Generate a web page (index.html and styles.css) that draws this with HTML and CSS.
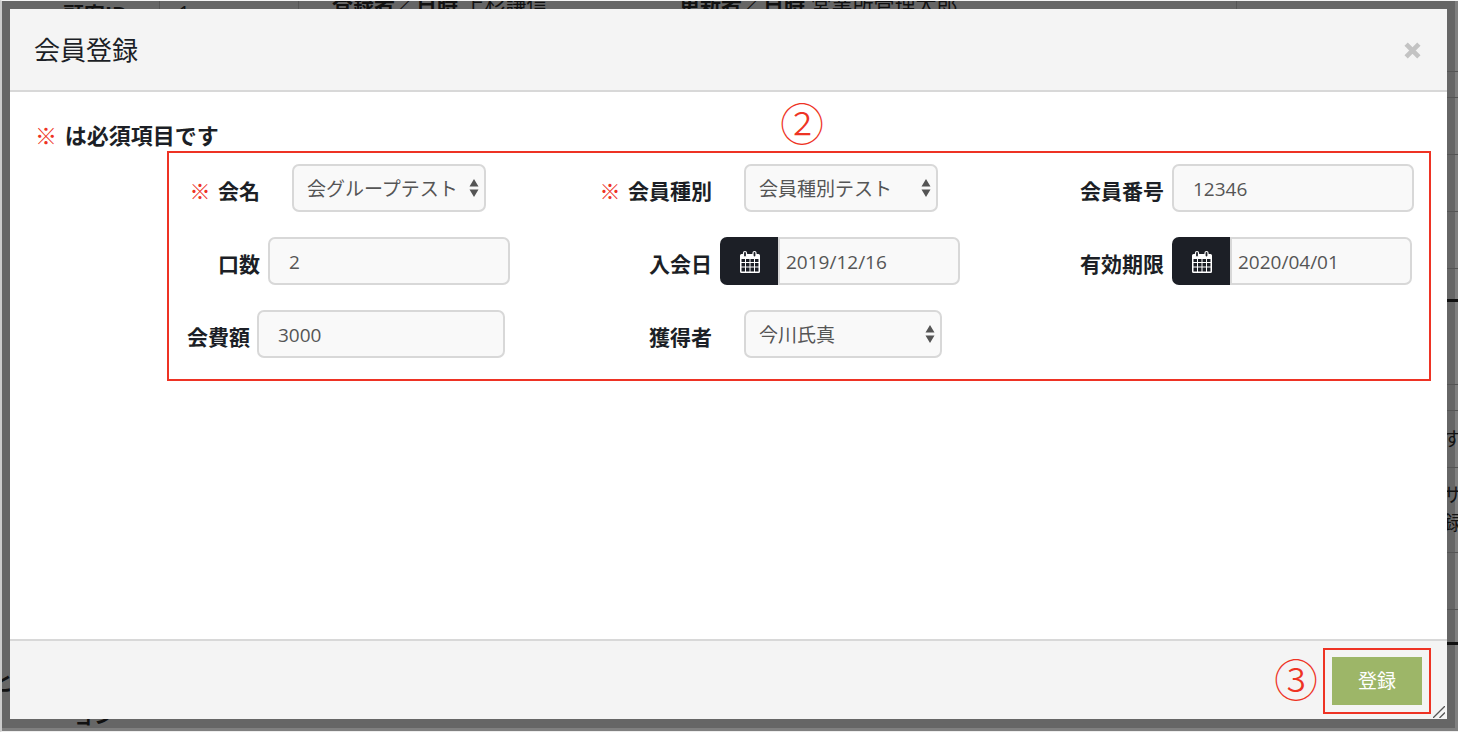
FILE: index.html
```html
<!DOCTYPE html>
<html lang="ja">
<head>
<meta charset="utf-8">
<title>会員登録</title>
<link rel="stylesheet" href="styles.css">
</head>
<body>
<div class="page" aria-hidden="true">
  <i class="shade"></i>
  <b class="bg-text id-label">顧客ID</b>
  <span class="bg-text id-value">1</span>
  <span class="bg-text created"><b>登録者／日時</b> 上杉謙信</span>
  <span class="bg-text updated"><b>更新者／日時</b> 営業所管理太郎</span>
  <i class="vline v1"></i><i class="vline v2"></i><i class="vline v3"></i>
  <div class="rows">
    <i class="r71"></i><i class="r26"></i><i class="r57"></i><i class="r57"></i><i class="r57"></i><i class="r33 thick"></i><i class="r83"></i><i class="r26"></i><i class="r57"></i><i class="r85"></i><i class="r57"></i><i class="r35 thick"></i>
  </div>
  <span class="bg-text side1">す</span>
  <span class="bg-text side2">サ<br>録</span>
  <b class="bg-text corner1">と</b>
  <b class="bg-text corner2">ョン</b>
</div>
<div class="backdrop">
  <form class="modal">
    <header class="modal-header">
      <h1>会員登録</h1>
      <button type="button" class="close" aria-label="閉じる">
        <svg viewBox="0 0 16 16" width="17" height="17"><path d="M2 2 14 14M14 2 2 14" stroke="currentColor" stroke-width="4.4" fill="none"/></svg>
      </button>
    </header>
    <main class="modal-body">
      <h2><span class="req">※</span> は必須項目です</h2>
      <div class="fields">
        <span class="mark mark-form">②</span>
        <label for="group"><span class="req">※</span> 会名</label>
        <div class="field"><span class="select"><select id="group"><option>会グループテスト</option></select><svg viewBox="0 0 10 18" width="10" height="18"><path d="M5 0 9.500 7.500H.5zM5 18 .5 10.500H9.500z"/></svg></span></div>
        <label for="type"><span class="req">※</span> 会員種別</label>
        <div class="field"><span class="select"><select id="type"><option>会員種別テスト</option></select><svg viewBox="0 0 10 18" width="10" height="18"><path d="M5 0 9.500 7.500H.5zM5 18 .5 10.500H9.500z"/></svg></span></div>
        <label for="number">会員番号</label>
        <div class="field"><input id="number" type="text" value="12346"></div>

        <label for="units">口数</label>
        <div class="field"><input id="units" type="text" value="2"></div>
        <label for="joined">入会日</label>
        <div class="field date">
          <button type="button" aria-label="入会日を選択"><svg viewBox="0 0 22 24" width="22" height="24"><path class="cal" fill-rule="evenodd" d="M2.500 4H19.500Q21 4 21 5.500V21.500Q21 23 19.500 23H2.500Q1 23 1 21.500V5.500Q1 4 2.500 4ZM2.500 9V12H6V9ZM7 9V12H10.500V9ZM11.500 9V12H15V9ZM16 9V12H19.500V9ZM2.500 13V16.500H6V13ZM7 13V16.500H10.500V13ZM11.500 13V16.500H15V13ZM16 13V16.500H19.500V13ZM2.500 17.500V21.500H6V17.500ZM7 17.500V21.500H10.500V17.500ZM11.500 17.500V21.500H15V17.500ZM16 17.500V21.500H19.500V17.500Z"/><rect class="ring" x="4.500" y="1.500" width="3" height="5.500" rx="1.500"/><rect class="ring" x="14" y="1.500" width="3" height="5.500" rx="1.500"/></svg></button><input id="joined" type="text" value="2019/12/16">
        </div>
        <label for="expires">有効期限</label>
        <div class="field date">
          <button type="button" aria-label="有効期限を選択"><svg viewBox="0 0 22 24" width="22" height="24"><path class="cal" fill-rule="evenodd" d="M2.500 4H19.500Q21 4 21 5.500V21.500Q21 23 19.500 23H2.500Q1 23 1 21.500V5.500Q1 4 2.500 4ZM2.500 9V12H6V9ZM7 9V12H10.500V9ZM11.500 9V12H15V9ZM16 9V12H19.500V9ZM2.500 13V16.500H6V13ZM7 13V16.500H10.500V13ZM11.500 13V16.500H15V13ZM16 13V16.500H19.500V13ZM2.500 17.500V21.500H6V17.500ZM7 17.500V21.500H10.500V17.500ZM11.500 17.500V21.500H15V17.500ZM16 17.500V21.500H19.500V17.500Z"/><rect class="ring" x="4.500" y="1.500" width="3" height="5.500" rx="1.500"/><rect class="ring" x="14" y="1.500" width="3" height="5.500" rx="1.500"/></svg></button><input id="expires" type="text" value="2020/04/01">
        </div>

        <div class="fee"><label for="fee">会費額</label><input id="fee" type="text" value="3000"></div>
        <label for="owner">獲得者</label>
        <div class="field"><span class="select wide"><select id="owner"><option>今川氏真</option></select><svg viewBox="0 0 10 18" width="10" height="18"><path d="M5 0 9.500 7.500H.5zM5 18 .5 10.500H9.500z"/></svg></span></div>
      </div>
    </main>
    <footer class="modal-footer">
      <span class="mark">③</span>
      <span class="frame"><button type="submit" class="submit">登録</button></span>
      <svg class="grip" viewBox="0 0 12 12" width="12" height="12"><path d="M0 12 12 0M6.500 12 12 6.500" stroke="#555" stroke-width="1.300" fill="none"/></svg>
    </footer>
  </form>
</div>
</body>
</html>
```

FILE: styles.css
```css
* { box-sizing: border-box; }

body {
  margin: 0;
  height: 100vh;
  overflow: hidden;
  font-family: "Open Sans", "Noto Sans CJK JP", sans-serif;
  font-size: 19px;
  color: #1c1f26;
}

input, select, button {
  font: inherit;
  margin: 0;
}

/* dimmed page behind the dialog */
.page {
  position: absolute;
  inset: 0;
  overflow: hidden;
  background: #808080;
  border-top: 1px solid #f4f4f4;
  border-left: 2px solid #ccc;
  border-bottom: 1px solid #eee;
}
.shade {
  position: absolute;
  inset: 0 3px 3px 0;
  background: #666;
}
.bg-text {
  position: absolute;
  color: #111;
  font-size: 21px;
  line-height: 28px;
  white-space: nowrap;
}
.id-label { left: 61px; top: -1px; }
.id-value { left: 176px; top: -1px; }
.created { left: 330px; top: -11px; }
.updated { left: 677px; top: -11px; }
.side1 { left: 1441px; top: 424px; font-size: 19px; }
.side2 { left: 1441px; top: 480px; font-size: 19px; }
.corner1 { left: -10px; top: 667px; }
.corner2 { left: 71px; top: 700px; }
.vline {
  position: absolute;
  top: 0;
  width: 1px;
  height: 10px;
  background: #555;
}
.v1 { left: 157px; }
.v2 { left: 296px; }
.v3 { left: 1234px; }
.rows {
  position: absolute;
  top: 0;
  right: 0;
  width: 12px;
}
.rows i {
  display: block;
  border-bottom: 1px solid #555;
}
.rows .thick { border-bottom: 3px solid #111; }
.r71 { height: 71px; }
.r26 { height: 26px; }
.r57 { height: 57px; }
.r33 { height: 33px; }
.r35 { height: 35px; }
.r83 { height: 83px; }
.r85 { height: 85px; }

.backdrop {
  position: fixed;
  inset: 0;
  display: flex;
  padding: 9px 11px 13px 10px;
}
.modal {
  flex: 1;
  display: flex;
  flex-direction: column;
  background: #fff;
}
.modal-header {
  display: flex;
  align-items: center;
  justify-content: space-between;
  padding: 20px 26px 19px 24px;
  background: #f4f4f4;
  border-bottom: 2px solid #d8d8d8;
}
h1 {
  margin: 0;
  font-size: 26px;
  line-height: 42px;
  font-weight: 400;
}
.close {
  display: flex;
  padding: 0;
  border: 0;
  background: none;
  color: #c3c3c3;
}

.modal-body {
  flex: 1;
  padding: 27px 16px 26px 25px;
}
h2 {
  margin: 0;
  font-size: 22px;
  line-height: 32px;
  font-weight: 700;
}
.req {
  margin-right: 2px;
  color: #ee3324;
  font-weight: 400;
}
.fields {
  position: relative;
  display: grid;
  grid-template-columns: 91px 1fr 179px 1fr 179px 1fr;
  grid-auto-rows: 48px;
  gap: 25px 8px;
  margin-left: 132px;
  padding: 11px 0 21px;
  border: 2px solid #ee3324;
}
label {
  padding-top: 6px;
  font-size: 21px;
  line-height: 42px;
  font-weight: 700;
  text-align: right;
  white-space: nowrap;
}
.field { display: flex; }
.mark {
  color: #ee3324;
  font-family: "Noto Sans CJK JP", sans-serif;
  font-size: 44px;
  font-weight: 300;
  line-height: 42px;
}
.mark-form {
  position: absolute;
  left: 611px;
  top: -52px;
}
.modal-footer .mark { padding-bottom: 6px; }
input, select {
  height: 48px;
  border: 2px solid #d8d8d8;
  border-radius: 7px;
  background: #f9f9f9;
  color: #555;
}
input {
  width: 242px;
  padding: 2px 19px 0;
}
.select {
  position: relative;
  width: 194px;
  margin-left: 24px;
}
.wide { width: 198px; }
select {
  width: 100%;
  padding: 2px 13px 0;
  appearance: none;
}
.select svg {
  position: absolute;
  right: 7px;
  top: 15px;
  fill: #555;
  pointer-events: none;
}
.date button {
  display: flex;
  align-items: center;
  justify-content: center;
  width: 58px;
  padding: 1px 0 0 1px;
  border: 0;
  border-radius: 7px 0 0 7px;
  background: #1c1f26;
}
.date input {
  width: 182px;
  padding: 2px 6px 0;
  border-radius: 0 7px 7px 0;
}
.cal { fill: #fff; }
.ring {
  fill: #1c1f26;
  stroke: #fff;
  stroke-width: 1.2;
}
.fee {
  grid-column: span 2;
  display: flex;
  gap: 7px;
}
.fee label { width: 81px; }
.fee input { width: 248px; }

.modal-footer {
  position: relative;
  display: flex;
  align-items: center;
  justify-content: flex-end;
  gap: 5px;
  padding: 7px 16px 5px;
  background: #f4f4f4;
  border-top: 2px solid #d8d8d8;
}
.frame {
  padding: 7px;
  border: 2px solid #ee3324;
}
.submit {
  display: block;
  height: 48px;
  padding: 0 26px 2px;
  border: 0;
  background: #9db668;
  color: #fff;
}
.grip {
  position: absolute;
  right: 2px;
  bottom: 1px;
}
```
